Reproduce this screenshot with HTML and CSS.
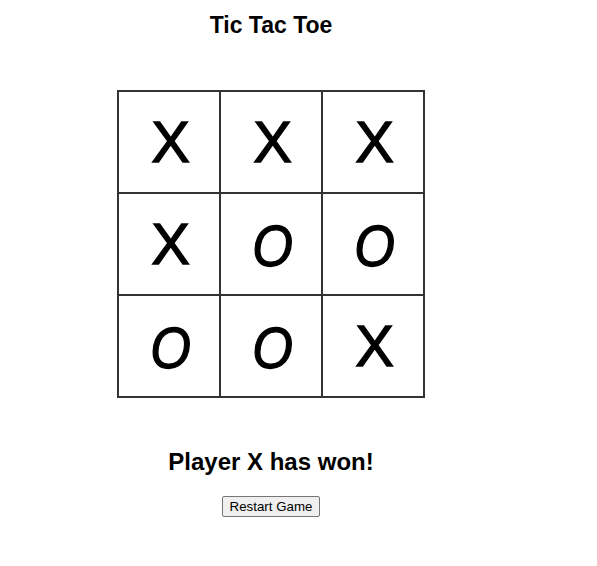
FILE: index.html
```html
<!DOCTYPE html>
<html lang="en">
<head>
<meta charset="utf-8">
<title>Tic Tac Toe</title>
<link rel="stylesheet" href="styles.css">
</head>
<body>
<div class="app">
  <h1 class="title">Tic Tac Toe</h1>
  <div class="board">
    <div class="cell x"><span class="mark">X</span></div>
    <div class="cell x"><span class="mark">X</span></div>
    <div class="cell x"><span class="mark">X</span></div>
    <div class="cell x"><span class="mark">X</span></div>
    <div class="cell o"><span class="mark">O</span></div>
    <div class="cell o"><span class="mark">O</span></div>
    <div class="cell o"><span class="mark">O</span></div>
    <div class="cell o"><span class="mark">O</span></div>
    <div class="cell x"><span class="mark">X</span></div>
  </div>
  <h2 class="status">Player X has won!</h2>
  <button class="restart" type="button">Restart Game</button>
</div>
</body>
</html>
```

FILE: styles.css
```css
html, body {
  background: #ffffff;
}
body {
  margin: 8px;
  font-family: "Liberation Sans", Arial, sans-serif;
  color: #000;
}
.app {
  width: 526px;
  display: flex;
  flex-direction: column;
  align-items: center;
}
.title {
  margin: 4px 0 0;
  font-size: 23px;
  line-height: 26px;
  font-weight: bold;
}
.board {
  margin-top: 52px;
  display: grid;
  grid-template-columns: repeat(3, 102px);
  grid-template-rows: repeat(3, 102px);
  border: 1px solid #333;
}
.cell {
  border: 1px solid #333;
  display: flex;
  align-items: center;
  justify-content: center;
  font-family: "Liberation Sans", Arial, sans-serif;
  font-size: 58px;
  line-height: 1;
  padding-left: 3px;
  -webkit-text-stroke: 1.3px #000;
}
.mark {
  display: inline-block;
}
.cell.o {
  font-style: italic;
  padding-top: 3px;
}
.cell.o .mark {
  transform: scaleX(0.9);
}
.status {
  margin: 50px 0 0;
  font-size: 24px;
  line-height: 28px;
  font-weight: bold;
}
.restart {
  margin-top: 20px;
  font-family: "Liberation Sans", Arial, sans-serif;
  font-size: 13.33px;
  line-height: 15px;
  padding: 2px 6px;
  background: #efefef;
  border: 1px solid #767676;
  border-radius: 2px;
  color: #000;
  width: 98px;
  height: 21px;
}
```
